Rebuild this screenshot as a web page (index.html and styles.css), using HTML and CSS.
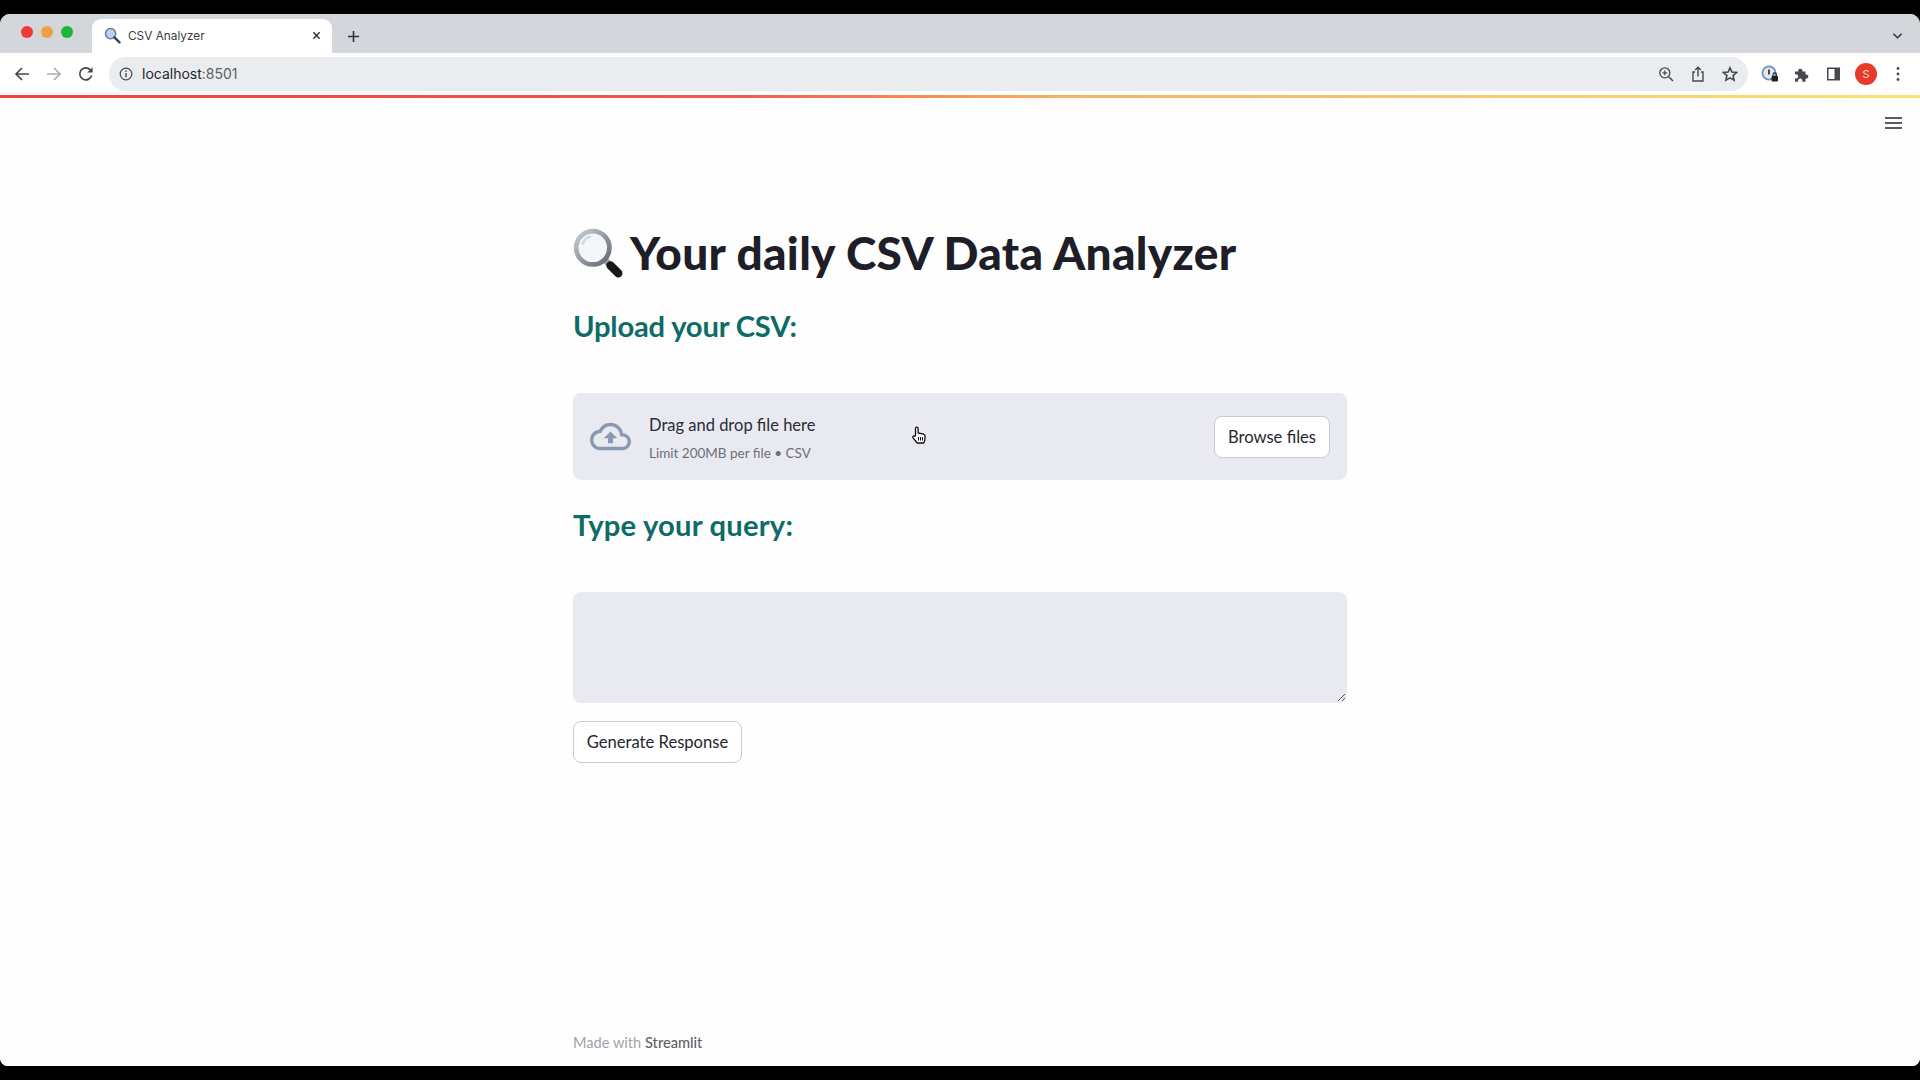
FILE: index.html
```html
<!DOCTYPE html>
<html lang="en">
<head>
  <meta charset="UTF-8" />
  <title>CSV Analyzer</title>
  <link rel="stylesheet" href="styles.css">
</head>
<body>
  <div class="window">
    <!-- Tab strip -->
    <div class="tabstrip">
      <div class="traffic">
        <span class="dot red"></span>
        <span class="dot amber"></span>
        <span class="dot green"></span>
      </div>
      <div class="tab">
        <svg class="tab-icon" viewBox="0 0 18 18">
          <circle cx="7" cy="7" r="5.4" fill="#b5d3f2" stroke="#6f7c8a" stroke-width="1.6"/>
          <path d="M11 11l5.4 5.4" stroke="#3d4650" stroke-width="2.6" stroke-linecap="round"/>
        </svg>
        <span class="tab-title">CSV Analyzer</span>
        <svg class="tab-close" viewBox="0 0 10 10"><path d="M1.5 1.5l7 7M8.5 1.5l-7 7" stroke="#2f3237" stroke-width="1.6"/></svg>
      </div>
      <svg class="new-tab" viewBox="0 0 14 14"><path d="M7 1v12M1 7h12" stroke="#2f3237" stroke-width="1.7"/></svg>
      <svg class="tab-menu" viewBox="0 0 12 8"><path d="M1.5 1.5L6 6l4.5-4.5" fill="none" stroke="#2f3237" stroke-width="1.6"/></svg>
    </div>

    <!-- Toolbar -->
    <div class="toolbar">
      <svg class="nav-icon" viewBox="0 0 16 16"><path d="M15 8H2M8 2L2 8l6 6" fill="none" stroke="#45494f" stroke-width="1.7"/></svg>
      <svg class="nav-icon" viewBox="0 0 16 16"><path d="M1 8h13M8 2l6 6-6 6" fill="none" stroke="#a9acb1" stroke-width="1.7"/></svg>
      <svg class="nav-icon" viewBox="0 0 16 16"><path d="M13.6 9.5A6 6 0 1 1 12.2 3.8L14 5.5" fill="none" stroke="#45494f" stroke-width="1.7"/><path d="M14.6 1.2v5.4H9.2z" fill="#45494f"/></svg>
      <div class="omnibox">
        <svg class="info-icon" viewBox="0 0 14 14">
          <circle cx="7" cy="7" r="5.8" fill="none" stroke="#45494f" stroke-width="1.2"/>
          <path d="M7 6v4.2M7 3.6v1.3" stroke="#45494f" stroke-width="1.4"/>
        </svg>
        <span class="url">localhost<span class="port">:8501</span></span>
        <div class="omni-actions">
          <svg class="omni-icon" viewBox="0 0 16 16"><circle cx="6.8" cy="6.8" r="5" fill="none" stroke="#45494f" stroke-width="1.3"/><path d="M10.5 10.5l4.5 4.5" stroke="#45494f" stroke-width="1.5"/><path d="M6.8 4.4v4.8M4.4 6.8h4.8" stroke="#45494f" stroke-width="1.2"/></svg>
          <svg class="omni-icon" viewBox="0 0 16 16"><path d="M5 6H3v9h10V6h-2" fill="none" stroke="#45494f" stroke-width="1.4"/><path d="M8 10.5V1.5M5.2 4L8 1.2 10.8 4" fill="none" stroke="#45494f" stroke-width="1.4"/></svg>
          <svg class="omni-icon" viewBox="0 0 16 16"><path d="M8 1.8l1.9 4.2 4.6.5-3.4 3.1 1 4.5L8 11.8l-4.1 2.3 1-4.5-3.4-3.1 4.6-.5z" fill="none" stroke="#45494f" stroke-width="1.6"/></svg>
        </div>
      </div>
      <div class="ext-icons">
        <svg class="ext-icon" viewBox="0 0 18 18">
          <circle cx="8" cy="8" r="6.6" fill="#e4e8ee" stroke="#6b93c4" stroke-width="1.8"/>
          <path d="M8 4.5v5" stroke="#33383e" stroke-width="1.8"/>
          <rect x="10.5" y="11" width="6.5" height="5.5" rx="1" fill="#1e2124"/>
          <path d="M12 11V9.6a1.7 1.7 0 0 1 3.4 0V11" fill="none" stroke="#1e2124" stroke-width="1.1"/>
        </svg>
        <svg class="ext-icon" viewBox="0 0 18 18"><path d="M2 6.5h3.2a2.2 2.2 0 1 1 4.2 0h3.1v3a2.2 2.2 0 1 1 0 4.2v3H9.2a2.2 2.2 0 1 0-4 0H2v-3.4a2.2 2.2 0 1 0 0-3.9z" fill="#45494f"/></svg>
        <svg class="ext-icon" viewBox="0 0 18 18"><rect x="2" y="2.5" width="13" height="13" fill="#45494f"/><rect x="3.5" y="4" width="6" height="10" fill="#fff"/></svg>
        <span class="avatar">S</span>
        <svg class="kebab" viewBox="0 0 4 16"><circle cx="2" cy="2.5" r="1.4" fill="#45494f"/><circle cx="2" cy="8" r="1.4" fill="#45494f"/><circle cx="2" cy="13.5" r="1.4" fill="#45494f"/></svg>
      </div>
    </div>

    <!-- Streamlit app -->
    <div class="app">
      <div class="progress"></div>
      <svg class="hamburger" viewBox="0 0 17 12"><path d="M0 1h17M0 6h17M0 11h17" stroke="#262730" stroke-width="1.7"/></svg>

      <main class="content">
        <h1 class="title">
          <svg class="title-icon" viewBox="0 0 48 48">
            <defs>
              <linearGradient id="rim" x1="0" y1="0" x2="1" y2="1">
                <stop offset="0" stop-color="#c9ced5"/>
                <stop offset="1" stop-color="#5f6770"/>
              </linearGradient>
            </defs>
            <path d="M31 31l4 4" stroke="#9a9fa6" stroke-width="6"/>
            <path d="M36 36l7.5 7.5" stroke="#17181a" stroke-width="8" stroke-linecap="round"/>
            <circle cx="19" cy="19" r="16" fill="#f4f6f9" stroke="url(#rim)" stroke-width="4.5"/>
            <path d="M9 16a11 11 0 0 1 8-8" fill="none" stroke="#d5dae0" stroke-width="2.6"/>
          </svg>
          Your daily CSV Data Analyzer
        </h1>
        <h3 class="label first">Upload your CSV:</h3>

        <section class="uploader">
          <svg class="cloud" viewBox="0 0 24 24">
            <path d="M19.35 10.04C18.67 6.59 15.64 4 12 4 9.11 4 6.6 5.64 5.35 8.04 2.34 8.36 0 10.91 0 14c0 3.31 2.69 6 6 6h13c2.76 0 5-2.24 5-5 0-2.64-2.05-4.78-4.65-4.96zM19 18H6c-2.21 0-4-1.79-4-4 0-2.05 1.53-3.76 3.56-3.97l1.07-.11.5-.95C8.08 7.14 9.94 6 12 6c2.62 0 4.88 1.86 5.39 4.43l.3 1.5 1.53.11c1.56.1 2.78 1.41 2.78 2.96 0 1.65-1.35 3-3 3zM8 13h2.55v3h2.9v-3H16l-4-4z" fill="#8a98b0"/>
          </svg>
          <div class="drop-text">
            <div class="drop-title">Drag and drop file here</div>
            <div class="drop-limit">Limit 200MB per file • CSV</div>
          </div>
          <button class="btn">Browse files</button>
          <svg class="cursor" viewBox="0 0 16 20">
            <path d="M4.5 9V2.4a1.3 1.3 0 0 1 2.6 0V7l5.4 1.2c1 .3 1.6 1 1.6 2l-.4 4.5c-.2 1-.6 1.6-1 2.3H6.2L2 11.8c-.9-1.2.7-2.6 1.8-1.5z" fill="#fff" stroke="#111" stroke-width="1.3"/>
            <path d="M7.5 11v3.5M9.5 11v3.5M11.5 11v3.5" stroke="#111" stroke-width="1"/>
          </svg>
        </section>

        <h3 class="label second">Type your query:</h3>

        <div class="query">
          <svg class="resize" viewBox="0 0 9 9"><path d="M1 8l7-7M5 8l3-3" stroke="#55585e" stroke-width="1"/></svg>
        </div>

        <button class="btn generate">Generate Response</button>
      </main>

      <footer class="footer">Made with <span class="footer-name">Streamlit</span></footer>
    </div>
  </div>
</body>
</html>
```

FILE: styles.css
```css
html, body {
  margin: 0;
  padding: 0;
  height: 100%;
  background: #000;
  overflow: hidden;
  font-family: "Lato", "Noto Sans", sans-serif;
}

.window {
  height: 1052px;
  margin-top: 14px;
  display: flex;
  flex-direction: column;
  border-radius: 10px 10px 8px 8px;
  overflow: hidden;
  background: #fefefe;
}

/* Tab strip */
.tabstrip {
  height: 39px;
  display: flex;
  align-items: flex-end;
  background: #d3d7dc;
  flex-shrink: 0;
}

.traffic {
  width: 92px;
  height: 27px;
  padding-left: 21px;
  box-sizing: border-box;
  display: flex;
  gap: 8px;
  flex-shrink: 0;
}

.dot {
  width: 12px;
  height: 12px;
  border-radius: 50%;
}

.red { background: #f1383a; }
.amber { background: #eda145; }
.green { background: #1db53a; }

.tab {
  width: 240px;
  height: 34px;
  background: #fff;
  border-radius: 9px 9px 0 0;
  display: flex;
  align-items: center;
  padding: 0 11px 1px 12px;
  box-sizing: border-box;
  flex-shrink: 0;
}

.tab-icon {
  width: 17px;
  height: 17px;
  margin-right: 7px;
}

.tab-title {
  flex: 1;
  font-family: "Inter", sans-serif;
  font-size: 11.8px;
  color: #3a3d42;
}

.tab-close {
  width: 9px;
  height: 9px;
}

.new-tab {
  width: 13px;
  height: 13px;
  margin: 0 0 10px 15px;
}

.tab-menu {
  width: 11px;
  height: 8px;
  margin: 0 17px 13px auto;
}

/* Toolbar */
.toolbar {
  height: 42px;
  display: flex;
  align-items: center;
  background: #fff;
  padding-left: 14px;
  flex-shrink: 0;
}

.nav-icon {
  width: 16px;
  height: 16px;
  margin-right: 16px;
  flex-shrink: 0;
}

.omnibox {
  width: 1639px;
  height: 34px;
  margin-left: -1px;
  padding: 0 10px 0 10px;
  box-sizing: border-box;
  display: flex;
  align-items: center;
  background: #eaecef;
  border-radius: 17px;
  flex-shrink: 0;
}

.info-icon {
  width: 14px;
  height: 14px;
  margin-right: 9px;
}

.url {
  font-family: "Inter", sans-serif;
  font-size: 14px;
  line-height: 16px;
  margin-top: -1px;
  color: #25282c;
}

.port { color: #5d6167; }

.omni-actions {
  margin-left: auto;
  display: flex;
  gap: 16px;
}

.omni-icon {
  width: 16px;
  height: 16px;
}

.ext-icons {
  display: flex;
  align-items: center;
  margin-left: 13px;
}

.ext-icon {
  width: 18px;
  height: 18px;
  margin-right: 14px;
}

.avatar {
  width: 22px;
  height: 22px;
  margin-left: -2px;
  border-radius: 50%;
  background: #e8392a;
  color: #f7dcd6;
  font-family: "Inter", sans-serif;
  font-size: 11px;
  line-height: 22px;
  text-align: center;
  margin-right: 19px;
}

.kebab {
  width: 4px;
  height: 16px;
}

/* App */
.app {
  position: relative;
  flex: 1;
  display: flex;
  flex-direction: column;
  background: #fefefe;
  color: #262730;
}

.progress {
  height: 3px;
  background: linear-gradient(90deg, #f0413c 0%, #f4574a 38%, #f6b25e 55%, #f9e27a 100%);
  flex-shrink: 0;
}

.hamburger {
  position: absolute;
  top: 22px;
  right: 18px;
  width: 17px;
  height: 12px;
}

.content {
  width: 774px;
  margin: 0 auto;
  flex: 1;
}

.title {
  margin: 125px 0 0;
  height: 60px;
  display: flex;
  align-items: center;
  gap: 7px;
  font-size: 46px;
  font-weight: 900;
  line-height: 60px;
  color: #1d1e27;
  letter-spacing: 0.3px;
  white-space: nowrap;
}

.title-icon {
  width: 50px;
  height: 50px;
  flex-shrink: 0;
}

.label {
  margin: 0;
  height: 40px;
  font-size: 29.2px;
  font-weight: 700;
  line-height: 40px;
  color: #0f6b66;
  letter-spacing: -0.2px;
}

.first { margin-top: 23px; }

.second {
  margin-top: 25px;
  letter-spacing: 0.2px;
}

.uploader {
  position: relative;
  height: 87px;
  margin-top: 47px;
  padding: 0 17px;
  box-sizing: border-box;
  display: flex;
  align-items: center;
  background: #e9eaf1;
  border-radius: 8px;
}

.cloud {
  width: 41px;
  height: 41px;
  margin-right: 18px;
  flex-shrink: 0;
}

.drop-text {
  flex: 1;
  padding-top: 2px;
}

.drop-title {
  font-size: 16.5px;
  line-height: 24px;
  color: #2b2c36;
}

.drop-limit {
  margin-top: 6px;
  font-size: 13.5px;
  line-height: 20px;
  color: #6c6f78;
}

.btn {
  height: 42px;
  padding: 0 13px;
  font-family: inherit;
  font-size: 16.6px;
  color: #262730;
  background: #fff;
  border: 1px solid #c9cbd0;
  border-radius: 8px;
}

.cursor {
  position: absolute;
  left: 338px;
  top: 33px;
  width: 16px;
  height: 20px;
}

.query {
  position: relative;
  height: 111px;
  margin-top: 47px;
  background: #e9eaf1;
  border-radius: 8px;
}

.resize {
  position: absolute;
  right: 1px;
  bottom: 1px;
  width: 9px;
  height: 9px;
}

.generate {
  display: block;
  width: 169px;
  margin-top: 18px;
  padding: 0;
}

.footer {
  width: 774px;
  margin: 0 auto 13px;
  font-size: 14.6px;
  line-height: 20px;
  color: #a2a3a9;
}

.footer-name {
  color: #5f6169;
  font-weight: 500;
}
```
